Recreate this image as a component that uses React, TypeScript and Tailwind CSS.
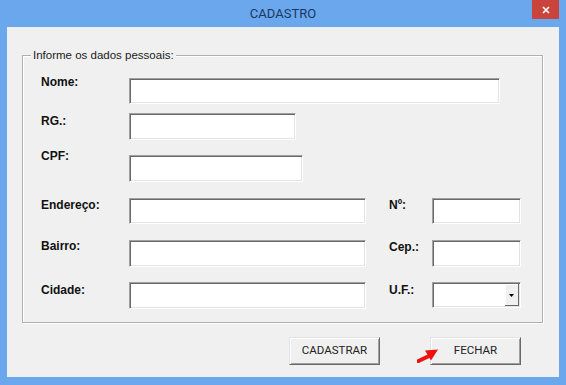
import type { ReactNode } from 'react';

const labelCls = "font-['Liberation_Sans',Arial,sans-serif] text-[12px] leading-[14px] font-bold text-[#111]";
const fieldCls =
  'h-[26px] bg-white border border-t-[#a0a0a0] border-l-[#a0a0a0] border-r-white border-b-white shadow-[inset_1px_1px_0_#696969,inset_-1px_-1px_0_#e3e3e3]';
const buttonCls =
  "w-[91px] h-[28px] bg-[#f0f0f0] border border-t-[#e3e3e3] border-l-[#e3e3e3] border-r-[#696969] border-b-[#696969] shadow-[inset_1px_1px_0_#fff,inset_-1px_-1px_0_#a0a0a0] font-['Roboto',sans-serif] text-[11.5px] text-[#222] flex items-center justify-center";

function Label({ children, className = '' }: { children: ReactNode; className?: string }) {
  return <div className={`${labelCls} ${className}`}>{children}</div>;
}

function Field({ className = '' }: { className?: string }) {
  return <div className={`${fieldCls} ${className}`} />;
}

function Combo() {
  return (
    <div className={`${fieldCls} w-[89px] flex justify-end pr-[1px] pt-[1px] pb-[1px]`}>
      <div className="w-[14px] h-full bg-[#f0f0f0] border-r border-b border-r-[#696969] border-b-[#696969] shadow-[inset_1px_1px_0_#fff] flex items-center justify-center">
        <svg width="5" height="3" viewBox="0 0 5 3" className="mt-[2px]">
          <path d="M0 0h5L2.5 3z" fill="#000" />
        </svg>
      </div>
    </div>
  );
}

export default function App() {
  return (
    <div className="w-[566px] h-[385px] bg-[#6aa7ed] flex flex-col overflow-hidden">
      <div className="relative h-[27px] flex items-center justify-center">
        <span className="font-['Roboto',sans-serif] text-[13px] text-[#1a3763] tracking-[0px]">CADASTRO</span>
        <div className="absolute right-[7px] top-0 w-[27px] h-[19px] bg-[#c9453b] flex items-center justify-center">
          <svg width="8" height="8" viewBox="0 0 8 8">
            <path d="M1 1l6 6M7 1l-6 6" stroke="#fff" strokeWidth="1.6" />
          </svg>
        </div>
      </div>

      <div className="mx-[7px] h-[350px] bg-[#f0f0f0] pt-[28px]">
        <div className="relative ml-[15px] w-[521px] h-[268px] border border-[#b0b0b0] shadow-[inset_1px_1px_0_#fff,1px_1px_0_#fff] pt-[19px] pl-[18px]">
          <span className="absolute left-[8px] top-[-8px] px-[2px] bg-[#f0f0f0] font-['Liberation_Sans',Arial,sans-serif] text-[11.5px] leading-[14px] text-[#1a1a1a]">
            Informe os dados pessoais:
          </span>

          <div className="flex h-[38px] items-start">
            <Label className="w-[88px]">Nome:</Label>
            <Field className="w-[371px] mt-[3px]" />
          </div>

          <div className="flex h-[36px] items-start">
            <Label className="w-[88px] mt-[1px]">RG.:</Label>
            <Field className="w-[167px] h-[27px]" />
          </div>

          <div className="flex h-[49px] items-start">
            <Label className="w-[88px]">CPF:</Label>
            <Field className="w-[174px] h-[27px] mt-[6px]" />
          </div>

          <div className="flex h-[41px] items-start">
            <Label className="w-[88px]">Endereço:</Label>
            <Field className="w-[237px]" />
            <Label className="w-[43px] ml-[23px]">Nº:</Label>
            <Field className="w-[89px]" />
          </div>

          <div className="flex h-[43px] items-start">
            <Label className="w-[88px]">Bairro:</Label>
            <Field className="w-[237px] h-[27px] mt-[1px]" />
            <Label className="w-[43px] ml-[23px] mt-[1px]">Cep.:</Label>
            <Field className="w-[89px] h-[27px] mt-[1px]" />
          </div>

          <div className="flex h-[27px] items-start">
            <Label className="w-[88px] mt-[1px]">Cidade:</Label>
            <Field className="w-[237px] h-[27px]" />
            <Label className="w-[43px] ml-[23px] mt-[1px]">U.F.:</Label>
            <Combo />
          </div>
        </div>

        <div className="flex mt-[14px] ml-[282px] gap-[50px]">
          <button className={buttonCls}>CADASTRAR</button>
          <div className="relative">
            <button className={buttonCls}>FECHAR</button>
            <svg
              width="22"
              height="16"
              viewBox="0 0 22 16"
              className="absolute left-[-13px] top-[10px]"
            >
              <path d="M1.5 14L12 9" stroke="#ee1111" strokeWidth="4" strokeLinecap="round" />
              <path d="M8 3.5L21 2.5L14 13.5z" fill="#ee1111" />
            </svg>
          </div>
        </div>
      </div>
    </div>
  );
}
